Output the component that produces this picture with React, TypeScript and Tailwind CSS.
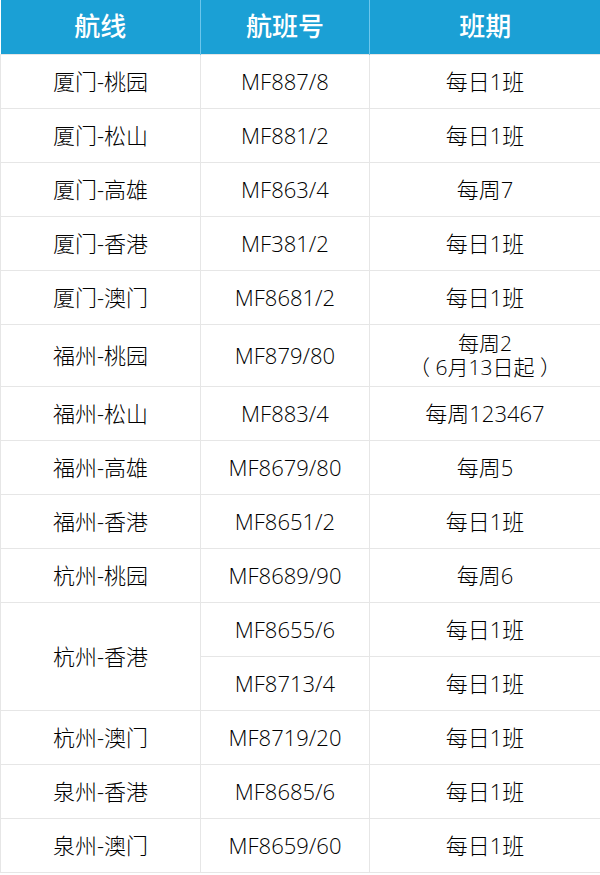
const rows: { route: string; flights: { no: string; days: string[] }[]; tall?: boolean }[] = [
  { route: "厦门-桃园", flights: [{ no: "MF887/8", days: ["每日1班"] }] },
  { route: "厦门-松山", flights: [{ no: "MF881/2", days: ["每日1班"] }] },
  { route: "厦门-高雄", flights: [{ no: "MF863/4", days: ["每周7"] }] },
  { route: "厦门-香港", flights: [{ no: "MF381/2", days: ["每日1班"] }] },
  { route: "厦门-澳门", flights: [{ no: "MF8681/2", days: ["每日1班"] }] },
  { route: "福州-桃园", flights: [{ no: "MF879/80", days: ["每周2", "（ 6月13日起 ）"] }], tall: true },
  { route: "福州-松山", flights: [{ no: "MF883/4", days: ["每周123467"] }] },
  { route: "福州-高雄", flights: [{ no: "MF8679/80", days: ["每周5"] }] },
  { route: "福州-香港", flights: [{ no: "MF8651/2", days: ["每日1班"] }] },
  { route: "杭州-桃园", flights: [{ no: "MF8689/90", days: ["每周6"] }] },
  {
    route: "杭州-香港",
    flights: [
      { no: "MF8655/6", days: ["每日1班"] },
      { no: "MF8713/4", days: ["每日1班"] },
    ],
  },
  { route: "杭州-澳门", flights: [{ no: "MF8719/20", days: ["每日1班"] }] },
  { route: "泉州-香港", flights: [{ no: "MF8685/6", days: ["每日1班"] }] },
  { route: "泉州-澳门", flights: [{ no: "MF8659/60", days: ["每日1班"] }] },
];

const cell = "border border-[#e6e6e6] text-center align-middle p-0";

export default function App() {
  return (
    <div
      className="w-[600px] bg-white text-black"
      style={{ fontFamily: '"Open Sans", "Noto Sans CJK SC", sans-serif' }}
    >
      <table className="w-full border-collapse table-fixed">
        <colgroup>
          <col className="w-[200px]" />
          <col className="w-[169px]" />
          <col className="w-[231px]" />
        </colgroup>
        <thead>
          <tr className="h-[54px] bg-[#1ba0d5] text-white text-[26px]">
            <th className="border-r border-[#6cc6ec] font-medium">航线</th>
            <th className="border-r border-[#6cc6ec] font-medium">航班号</th>
            <th className="font-medium">班期</th>
          </tr>
        </thead>
        <tbody className="text-[22px] leading-[26px] font-light">
          {rows.map((r) =>
            r.flights.map((f, i) => (
              <tr key={r.route + f.no} className={r.tall ? "h-[62px]" : "h-[54px]"}>
                {i === 0 && (
                  <td className={cell} rowSpan={r.flights.length}>
                    {r.route}
                  </td>
                )}
                <td className={cell}>{f.no}</td>
                <td className={cell}>
                  {f.days.map((d) => (
                    <div key={d} className={f.days.length > 1 ? "text-[21px] leading-[24px]" : ""}>
                      {d}
                    </div>
                  ))}
                </td>
              </tr>
            ))
          )}
        </tbody>
      </table>
    </div>
  );
}
